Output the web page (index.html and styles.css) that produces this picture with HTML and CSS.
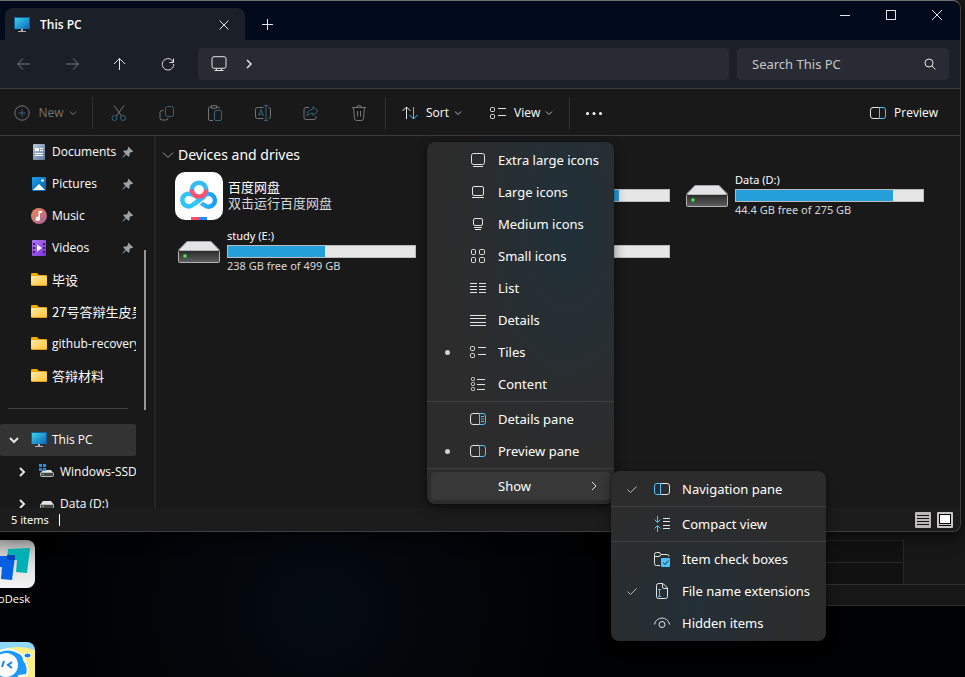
FILE: index.html
```html
<!DOCTYPE html>
<html lang="en">
<head>
<meta charset="utf-8">
<title>This PC</title>
<link rel="stylesheet" href="styles.css">
</head>
<body>
<svg class="defs" aria-hidden="true">
  <defs>
    <linearGradient id="g-screen" x1="0" y1="0" x2="1" y2="1"><stop offset="0" stop-color="#35d6e8"/><stop offset="1" stop-color="#1262bd"/></linearGradient>
    <linearGradient id="g-folder" x1="0" y1="0" x2="1" y2="1"><stop offset="0" stop-color="#ffe9a2"/><stop offset="1" stop-color="#ffc736"/></linearGradient>
    <linearGradient id="g-drive" x1="0" y1="0" x2="0" y2="1"><stop offset="0" stop-color="#292929"/><stop offset="1" stop-color="#606060"/></linearGradient>
    <linearGradient id="g-doc" x1="0" y1="0" x2="1" y2="1"><stop offset="0" stop-color="#b4c8dc"/><stop offset="1" stop-color="#5d7b9b"/></linearGradient>
    <linearGradient id="g-pic" x1="0" y1="0" x2="1" y2="1"><stop offset="0" stop-color="#1ba0e8"/><stop offset="1" stop-color="#0a5cad"/></linearGradient>
    <linearGradient id="g-music" x1="0" y1="0" x2="1" y2="1"><stop offset="0" stop-color="#f08a4c"/><stop offset="1" stop-color="#a95fa5"/></linearGradient>
    <linearGradient id="g-video" x1="0" y1="0" x2="1" y2="1"><stop offset="0" stop-color="#b274f2"/><stop offset="1" stop-color="#7b35d4"/></linearGradient>
    <linearGradient id="g-cloud" x1="0" y1="0" x2="1" y2="0"><stop offset="0" stop-color="#35cdfb"/><stop offset="1" stop-color="#1a9cff"/></linearGradient>
    <symbol id="pc" viewBox="0 0 16 16"><rect y="0" width="16" height="12" fill="#125f9c"/><rect x="1" y="1" width="14" height="11" fill="url(#g-screen)"/><path d="M7 12h2v2h3v1H4v-1h3z" fill="#a9b4bd"/></symbol>
    <symbol id="folder" viewBox="0 0 16 16"><path d="M0 2q0-1 1-1h5l2 2h7q1 0 1 1v3H0z" fill="#f0a800"/><rect y="4" width="16" height="10" rx="1" fill="#e0a020"/><rect y="4" width="16" height="9" rx="1" fill="url(#g-folder)"/></symbol>
    <symbol id="pin" viewBox="0 0 12 12"><path d="M6.500.8 11.200 5.500 10 6.300 8.900 6.100 7.400 7.600 7.600 9.800 6.600 10.800 4.200 8.400 1 11.600.400 11 3.600 7.800 1.200 5.400 2.200 4.400 4.500 4.600 6 3.100 5.700 1.800z" fill="#9aa1a7"/></symbol>
    <symbol id="drive" viewBox="0 0 42 24"><path d="M9 1.500h24L41 10H1z" fill="#e3e3e6"/><path d="M9 1.500h24M9 1.500.5 10M33 1.500 41.500 10" stroke="#a6a6aa" fill="none"/><rect x=".5" y="10.500" width="41" height="12" rx="1" fill="url(#g-drive)" stroke="#b5b5b5"/><circle cx="7" cy="16" r="2" fill="#24c62e"/><circle cx="7" cy="16" r=".8" fill="#a2ff9a"/></symbol>
    <symbol id="minidrive" viewBox="0 0 16 16"><path d="M4 5h8l3 4H1z" fill="#e3e3e6"/><rect x="1.500" y="8.500" width="13" height="4" rx="1" fill="#444" stroke="#bbb"/><path d="M3 10h2v1H3z" fill="#2fe03a"/></symbol>
    <symbol id="down" viewBox="0 0 8 8"><path d="m1 2.500 3 3 3-3"/></symbol>
    <symbol id="right" viewBox="0 0 8 12"><path d="m2 2 4 4-4 4"/></symbol>
    <symbol id="tick" viewBox="0 0 12 12"><path d="m1.500 6.500 3 3 6-6"/></symbol>
    <symbol id="preview" viewBox="0 0 16 16"><path d="M9.500 2.500H3q-2.500 0-2.500 2.500v6q0 2.500 2.500 2.500h6.500"/><path class="blue" d="M9.500 2.500H13q2.500 0 2.500 2.500v6q0 2.500-2.500 2.500H9.500z"/></symbol>
    <symbol id="tiles" viewBox="0 0 16 16"><rect x=".5" y="2.500" width="4" height="4" rx="1"/><rect x=".5" y="9.500" width="4" height="4" rx="1"/><path d="M8 3.500h8M8 10.500h8"/></symbol>
  </defs>
</svg>

<div class="back-window" aria-hidden="true">
  <div class="back-main"><div class="back-list"><i></i><i></i></div></div>
  <div class="back-foot"></div>
</div>

<div class="window">
  <header class="titlebar">
    <div class="tab"><svg class="i16"><use href="#pc"/></svg><span>This PC</span>
      <button aria-label="Close tab"><svg class="i12 line" viewBox="0 0 12 12"><path d="m1.500 1.500 9 9M10.500 1.500l-9 9"/></svg></button></div>
    <button class="new-tab" aria-label="New tab"><svg class="i12 line" viewBox="0 0 12 12"><path d="M6.500 1v11M1 6.500h11"/></svg></button>
    <div class="caption">
      <button aria-label="Minimize"><svg class="i12 line" viewBox="0 0 12 12"><path d="M1 6.500h10"/></svg></button>
      <button aria-label="Maximize"><svg class="i12 line" viewBox="0 0 12 12"><rect x="1.500" y="1.500" width="9" height="9"/></svg></button>
      <button aria-label="Close"><svg class="i12 line" viewBox="0 0 12 12"><path d="m1 1 10 10M11 1 1 11"/></svg></button>
    </div>
  </header>

  <div class="address-row">
    <div class="history">
      <button disabled aria-label="Back"><svg class="i16 line" viewBox="0 0 16 16"><path d="M14 8H2m5-5.500L1.500 8 7 13.500"/></svg></button>
      <button disabled aria-label="Forward"><svg class="i16 line" viewBox="0 0 16 16"><path d="M2 8h12M9 2.500 14.500 8 9 13.500"/></svg></button>
      <button aria-label="Up"><svg class="i16 line" viewBox="0 0 16 16"><path d="M7.500 14V2.500M2 8l5.500-5.500L13 8"/></svg></button>
      <button aria-label="Refresh"><svg class="i16 line" viewBox="0 0 16 16"><path d="M13.300 6.200A5.700 5.700 0 1 0 13.700 8M13.500 2.500v4h-4"/></svg></button>
    </div>
    <div class="address">
      <svg class="i16 line" viewBox="0 0 16 16"><rect x="1" y=".7" width="14" height="11.600" rx="2"/><path d="M5.500 12.500v2m5-2v2M3.500 14.500h9"/></svg>
      <svg class="crumb line"><use href="#right"/></svg>
    </div>
    <label class="search"><input type="text" placeholder="Search This PC" aria-label="Search This PC">
      <svg class="i12 line" viewBox="0 0 12 12"><circle cx="5" cy="5" r="4"/><path d="m8 8 3.500 3.500"/></svg></label>
  </div>

  <div class="toolbar">
    <button class="new" disabled><svg class="i16 line" viewBox="0 0 16 16"><circle cx="8" cy="8" r="7.200"/><path class="blue" d="M8 4.500v7M4.500 8h7"/></svg><span>New</span><svg class="i8 line"><use href="#down"/></svg></button>
    <div class="edit">
      <button disabled aria-label="Cut"><svg class="i16 line" viewBox="0 0 16 16"><path d="M3 .5 10.500 11M13 .5 5.500 11"/><circle class="blue" cx="3.500" cy="13" r="2.500"/><circle class="blue" cx="12" cy="13" r="2.500"/></svg></button>
      <button disabled aria-label="Copy"><svg class="i16 line" viewBox="0 0 16 16"><path d="M4.500 5.500H3q-2 0-2 2V13q0 2 2 2h4q2 0 2-2"/><rect class="blue" x="6.500" y="1.500" width="8" height="10" rx="2"/></svg></button>
      <button disabled aria-label="Paste"><svg class="i16 line" viewBox="0 0 16 16"><path d="M6 15.500H3q-1.500 0-1.500-1.500V3.500Q1.500 2 3 2h1m6 0h1q1.500 0 1.500 1.500M4.500.7h5v2.500h-5z"/><rect class="blue" x="7.500" y="5.500" width="7" height="10" rx="1.500"/></svg></button>
      <button disabled aria-label="Rename"><svg class="i16 line" viewBox="0 0 16 16"><path d="M8.500 2.500h-6Q.5 2.500.5 4.500v7q0 2 2 2h6m5-11q2 0 2 2v7q0 2-2 2"/><path class="blue" d="m3.500 11 2.500-6.500L8.500 11M4.300 9h3.400M11 1v14M9 .5h4m-4 15h4"/></svg></button>
      <button disabled aria-label="Share"><svg class="i16 line" viewBox="0 0 16 16"><path d="M6 2.500H3q-2 0-2 2v8q0 2 2 2h8q2 0 2-2V11"/><path class="blue" d="M10 1.500 15 6l-5 4.500V8Q6 8 4 11q0-6 6-7z"/></svg></button>
      <button disabled aria-label="Delete"><svg class="i16 line" viewBox="0 0 16 16"><path d="M1 2.500h14M5.500 2.500q0-2 2.500-2t2.500 2M2.500 2.500l1 11q.2 2 2 2h5q1.800 0 2-2l1-11M6.500 6v5.500m3-5.500v5.500"/></svg></button>
    </div>
    <div class="arrange">
      <button><svg class="i16 line" viewBox="0 0 16 16"><path d="M4.500 14V2M.5 6l4-4 4 4"/><path class="blue" d="M11.500 2v12M7.500 10l4 4 4-4"/></svg><span>Sort</span><svg class="i8 line dim"><use href="#down"/></svg></button>
      <button><svg class="i16 line"><use href="#tiles"/></svg><span>View</span><svg class="i8 line dim"><use href="#down"/></svg></button>
    </div>
    <button class="more" aria-label="See more"><svg class="i16" viewBox="0 0 16 16" fill="#fff"><circle cx="1.500" cy="8.500" r="1.500"/><circle cx="8" cy="8.500" r="1.500"/><circle cx="14.500" cy="8.500" r="1.500"/></svg></button>
    <button class="preview"><svg class="i16 line"><use href="#preview"/></svg><span>Preview</span></button>
  </div>

  <div class="body">
    <nav class="sidebar">
      <div class="tree">
        <a href="#"><svg class="i16" viewBox="0 0 16 16"><rect x="2" width="12" height="16" rx="1" fill="url(#g-doc)"/><path d="M4 4h4v3H4zm5 0h3v1H9zm0 2h3v1H9zM4 9h8v1H4zm0 2h8v1H4z" fill="#fff"/></svg><span>Documents</span><svg class="i12 pin"><use href="#pin"/></svg></a>
        <a href="#"><svg class="i16" viewBox="0 0 16 16"><rect x="1" y="1" width="14" height="14" rx="1" fill="url(#g-pic)"/><path d="m2 14 6-6 6 6z" fill="#fff"/><circle cx="11.500" cy="4.500" r="1.300" fill="#fff"/></svg><span>Pictures</span><svg class="i12 pin"><use href="#pin"/></svg></a>
        <a href="#"><svg class="i16" viewBox="0 0 16 16"><circle cx="8" cy="8" r="8" fill="url(#g-music)"/><path d="M7.500 3h3.500v2H9v5.500A2.200 2.200 0 1 1 7.500 8.700z" fill="#fff"/></svg><span>Music</span><svg class="i12 pin"><use href="#pin"/></svg></a>
        <a href="#"><svg class="i16" viewBox="0 0 16 16"><rect x="1" width="14" height="16" rx="1" fill="url(#g-video)"/><path d="M2 3h2v2H2zm0 4h2v2H2zm0 4h2v2H2zM12 3h2v2h-2zm0 4h2v2h-2zm0 4h2v2h-2z" fill="#3b1c72"/><path d="m6 4.500 5 3.500-5 3.500z" fill="#fff"/></svg><span>Videos</span><svg class="i12 pin"><use href="#pin"/></svg></a>
        <a href="#"><svg class="i16"><use href="#folder"/></svg><span class="cjk">毕设</span></a>
        <a href="#"><svg class="i16"><use href="#folder"/></svg><span class="cjk">27号答辩生皮昊</span></a>
        <a href="#"><svg class="i16"><use href="#folder"/></svg><span>github-recovery</span></a>
        <a href="#"><svg class="i16"><use href="#folder"/></svg><span class="cjk">答辩材料</span></a>
        <hr>
        <a href="#" class="root current"><svg class="i12 line bold" viewBox="0 0 12 12"><path d="m2 4 4 4 4-4"/></svg><svg class="i16"><use href="#pc"/></svg><span>This PC</span></a>
        <a href="#" class="child"><svg class="arrow line bold"><use href="#right"/></svg><svg class="i16" viewBox="0 0 16 16"><path d="M4 6h8l3 4H1z" fill="#e3e3e6"/><rect x="1.500" y="8.500" width="13" height="4" rx="1" fill="#444" stroke="#bbb"/><path d="M3 10h2v1H3z" fill="#2fe03a"/><path d="M0 0h3v3H0zm4 0h3v3H4zM0 4h3v3H0zm4 0h3v3H4z" fill="#1c93e0"/></svg><span>Windows-SSD</span></a>
        <a href="#" class="child"><svg class="arrow line bold"><use href="#right"/></svg><svg class="i16"><use href="#minidrive"/></svg><span>Data (D:)</span></a>
      </div>
      <div class="scroll"><i></i></div>
    </nav>
    <main class="content">
      <h1><svg class="i12 line" viewBox="0 0 12 12"><path d="m1 3.500 5 5 5-5"/></svg>Devices and drives</h1>
      <div class="tiles">
        <div class="tile cloud">
          <svg class="app" viewBox="0 0 48 48"><rect width="48" height="48" rx="10" fill="#fff"/><g fill="none" stroke-width="4.500"><path d="M29.500 24.500 17.500 33A6.300 6.300 0 1 1 15.500 22Q19 22 23 26l2 2" stroke="#30c5fb"/><path d="M18.500 32.500 29 24a6.300 6.300 0 1 1 1 9.500q-2-.5-3.500-2.500" stroke="url(#g-cloud)"/><path d="M16.800 20v-2a7.200 7.200 0 0 1 14.400 0v2" stroke="#33bdfb"/><path d="M16.800 17.500a7.200 7.200 0 0 0 14.400 0" stroke="#fc5371"/></g><path d="M16 45h8v3h-8z" fill="#fc4b6c"/><path d="M24 45h8v3h-8z" fill="#2589ff"/></svg>
          <div class="info cjk"><b>百度网盘</b><small>双击运行百度网盘</small></div>
        </div>
        <div class="tile"><svg class="disk"><use href="#drive"/></svg><div class="info"><b></b><div class="meter"><i style="width:73%"></i></div><small></small></div></div>
        <div class="tile"><svg class="disk"><use href="#drive"/></svg><div class="info"><b>Data (D:)</b><div class="meter"><i style="width:84%"></i></div><small>44.4 GB free of 275 GB</small></div></div>
        <div class="tile"><svg class="disk"><use href="#drive"/></svg><div class="info"><b>study (E:)</b><div class="meter"><i style="width:52%"></i></div><small>238 GB free of 499 GB</small></div></div>
        <div class="tile"><svg class="disk"><use href="#drive"/></svg><div class="info"><b></b><div class="meter"><i style="width:50%"></i></div><small></small></div></div>
      </div>
    </main>
  </div>

  <footer class="status"><span>5 items</span>
    <button aria-label="Details view"><svg class="i16" viewBox="0 0 16 16"><rect width="16" height="16" rx="1" fill="#bcbabb"/><path d="M2 3.500h12M2 6.500h12M2 9.500h12M2 12.500h12" stroke="#111"/></svg></button>
    <button aria-label="Large icons view"><svg class="i16" viewBox="0 0 16 16"><rect width="16" height="16" rx="1" fill="#c8c6c4"/><rect x="2.500" y="2.500" width="11" height="9" fill="#fff" stroke="#000"/><path d="M2 13.500h12" stroke="#000"/></svg></button>
  </footer>

  <div class="menu view-menu" role="menu">
    <button role="menuitem"><svg class="i16 line" viewBox="0 0 16 16"><rect x="1.500" y="1.500" width="13" height="11" rx="2"/><path d="M3 14.500h10"/></svg><span>Extra large icons</span></button>
    <button role="menuitem"><svg class="i16 line" viewBox="0 0 16 16"><rect x="2.500" y="2.500" width="11" height="9" rx="1.500"/><path d="M2 13.500h12"/></svg><span>Large icons</span></button>
    <button role="menuitem"><svg class="i16 line" viewBox="0 0 16 16"><rect x="3.500" y="2.500" width="9" height="7" rx="1.500"/><path d="M4 11.500h8M5 13.500h6"/></svg><span>Medium icons</span></button>
    <button role="menuitem"><svg class="i16 line" viewBox="0 0 16 16"><rect x="1.500" y="1.500" width="4" height="5" rx="1"/><rect x="9.500" y="1.500" width="5" height="5" rx="1"/><rect x="1.500" y="9.500" width="4" height="5" rx="1"/><rect x="9.500" y="9.500" width="5" height="5" rx="1"/></svg><span>Small icons</span></button>
    <button role="menuitem"><svg class="i16 line" viewBox="0 0 16 16"><path d="M0 3.500h7m2 0h7M0 6.500h7m2 0h7M0 9.500h7m2 0h7M0 12.500h7m2 0h7"/></svg><span>List</span></button>
    <button role="menuitem"><svg class="i16 line" viewBox="0 0 16 16"><path d="M0 3.500h16M0 6.500h16M0 10.500h16M0 13.500h16"/></svg><span>Details</span></button>
    <button role="menuitem" class="chosen"><svg class="i16 line"><use href="#tiles"/></svg><span>Tiles</span></button>
    <button role="menuitem"><svg class="i16 line" viewBox="0 0 16 16"><rect x="1.500" y="1.500" width="3" height="3" rx="1"/><rect x="1.500" y="6.500" width="3" height="3" rx="1"/><rect x="1.500" y="11.500" width="3" height="3" rx="1"/><path d="M7 3.500h8M7 8.500h8M7 13.500h8"/></svg><span>Content</span></button>
    <hr>
    <button role="menuitem"><svg class="i16 line" viewBox="0 0 16 16"><use href="#preview" width="16" height="16"/><path class="blue" d="M11 5.500h3M11 8h3M11 10.500h3"/></svg><span>Details pane</span></button>
    <button role="menuitem" class="chosen"><svg class="i16 line"><use href="#preview"/></svg><span>Preview pane</span></button>
    <hr>
    <button role="menuitem" class="open"><span>Show</span><svg class="arrow line"><use href="#right"/></svg></button>
  </div>

  <div class="menu show-menu" role="menu">
    <button role="menuitem" class="checked"><svg class="i12 line"><use href="#tick"/></svg><svg class="i16 line" viewBox="0 0 16 16"><path d="M6.500 2.500H13q2.500 0 2.500 2.500v6q0 2.500-2.500 2.500H6.500"/><path class="blue" d="M6.500 2.500H3Q.5 2.500.5 5v6q0 2.500 2.500 2.500h3.500z"/></svg><span>Navigation pane</span></button>
    <hr>
    <button role="menuitem"><svg class="i16 line" viewBox="0 0 16 16"><path d="M9 2.500h7M9 5.500h7M9 9.500h7M9 12.500h7"/><path class="blue" d="M3.500 0v6M.5 3.500l3 3 3-3M3.500 16v-6M.5 12.500l3-3 3 3"/></svg><span>Compact view</span></button>
    <hr>
    <button role="menuitem"><svg class="i16 line" viewBox="0 0 16 16"><path d="M6 14.500H2.500q-2 0-2-2v-9q0-2 2-2H5q1 0 2 2h6q2 0 2 2M.5 5.500H5q1 0 2-2"/><rect x="7" y="7" width="9" height="9" rx="1" fill="#4cc2ff" stroke="none"/><path d="m9 11.500 2 2 3.500-4" stroke="#18232b"/></svg><span>Item check boxes</span></button>
    <button role="menuitem" class="checked"><svg class="i12 line"><use href="#tick"/></svg><svg class="i16 line" viewBox="0 0 16 16"><path d="M4.500.5H9L13.500 5v8.500q0 2-2 2h-7q-2 0-2-2v-11q0-2 2-2zM8.500.5V4q0 1.500 1.500 1.500h3.500"/><path class="blue" d="M5.500 6.500v7M4 6.500h3M4 13.500h3"/></svg><span>File name extensions</span></button>
    <button role="menuitem"><svg class="i16 line" viewBox="0 0 16 16"><path d="M.5 9.500C2 1 14 1 15.500 9.500"/><circle cx="8" cy="9.500" r="3"/></svg><span>Hidden items</span></button>
  </div>
</div>

<section class="desktop">
  <figure>
    <svg viewBox="0 0 48 48"><defs><linearGradient id="g-td" x1="0" y1="0" x2="0" y2="1"><stop offset="0" stop-color="#aaa"/><stop offset=".5" stop-color="#ddd"/><stop offset="1" stop-color="#f4f4f4"/></linearGradient></defs><rect width="48" height="48" rx="8" fill="url(#g-td)"/><path d="M21 9l22-1-3 25-11-1 1-12H20z" fill="#00b0b4"/><path d="M5 16h23l-3 24-11-1 1-12H4z" fill="#0560e4"/><path d="M20 15h8v5h-8z" fill="#0844b5"/></svg>
    <figcaption>ToDesk</figcaption>
  </figure>
  <figure>
    <svg viewBox="0 0 48 48"><defs><clipPath id="c-app"><rect width="48" height="48" rx="8"/></clipPath></defs><g clip-path="url(#c-app)"><rect width="48" height="48" fill="#8fd9fb"/><path d="M14 8q16-6 34 0v40H14z" fill="#fdee83"/><path d="M8 12q12-9 26 0 3 2 3 6 5 6 3 15l-8 1-4 14H8z" fill="#1c98f7" stroke="#fff" stroke-width="2"/><circle cx="19" cy="23" r="12" fill="#fff"/><path d="m17 19-2 6m10-5-4 3 4 3" fill="none" stroke="#1683e8" stroke-width="2"/><ellipse cx="40.500" cy="13.500" rx="3.500" ry="2.500" fill="#1683e8" stroke="#fff"/></g></svg>
  </figure>
</section>
</body>
</html>
```
FILE: styles.css
```css
* { box-sizing: border-box; }

body {
  margin: 0;
  height: 100vh;
  overflow: hidden;
  position: relative;
  isolation: isolate;
  display: grid;
  grid-template-rows: minmax(0, 1fr) 145px;
  background:
    radial-gradient(ellipse at 320px 610px, #050b12, transparent 280px),
    #000102;
  color: #fff;
  font: 12px/16px "Open Sans", "Noto Sans", "Noto Sans CJK SC", sans-serif;
}

button {
  display: flex;
  align-items: center;
  justify-content: center;
  padding: 0;
  border: 0;
  background: none;
  color: inherit;
  font: inherit;
}

a { color: inherit; text-decoration: none; }
svg { display: block; flex: none; }
hr { border: 0; height: 1px; background: #404040; }

.defs { position: absolute; width: 0; height: 0; }
.i16 { width: 16px; height: 16px; }
.i12 { width: 12px; height: 12px; }
.i8 { width: 8px; height: 8px; }
.arrow, .crumb { width: 8px; height: 12px; }
.line { fill: none; stroke: #e4e4e4; stroke-width: 1; }
.bold { stroke-width: 2; }
.dim { stroke: #b5b5b5; }
.blue { stroke: #4cc2ff; }
.cjk { font-family: "Noto Sans CJK SC", sans-serif; font-size: 13px; }

/* Window left open behind the file manager */
.back-window {
  position: absolute;
  z-index: -1;
  inset: 0 0 71px 65%;
  display: grid;
  grid-template-rows: 1fr 21px;
  background: #171717;
}
.back-main {
  display: flex;
  align-items: flex-end;
  border-bottom: 1px solid #303030;
}
.back-list {
  width: calc(100% - 61px);
  border-right: 1px solid #292929;
  background: #111;
}
.back-list i { display: block; height: 22px; border-top: 1px solid #262626; }
.back-foot { border-bottom: 1px solid #303030; }

.window {
  position: relative;
  display: flex;
  flex-direction: column;
  min-height: 0;
  margin-right: 4px;
  border: solid #3d3d3d;
  border-width: 1px 1px 1px 0;
  border-top-color: #707070;
  border-radius: 0 8px 8px 0;
  background: #191919;
  box-shadow: 0 4px 16px #000a;
}

.titlebar {
  display: flex;
  height: 39px;
  padding-left: 5px;
  background: #000a1b;
  border-radius: 0 8px 0 0;
}
.tab {
  display: flex;
  align-items: center;
  gap: 10px;
  width: 240px;
  margin-top: 7px;
  padding: 1px 15px 0 9px;
  border-radius: 8px 8px 0 0;
  background: #1b1f27;
  font-weight: 600;
}
.tab button { margin-left: auto; }
.new-tab { width: 44px; padding-top: 7px; }
.caption { display: flex; height: 28px; margin-left: auto; }
.caption button { width: 46px; }

.address-row {
  display: flex;
  gap: 8px;
  height: 49px;
  padding: 8px 11px 8px 0;
  background: #1b1f27;
  border-bottom: 1px solid #3c3c3e;
}
.history { display: grid; grid-template-columns: repeat(4, 48px); width: 190px; }
button:disabled .line { opacity: 0.45; }
button:disabled { color: #747474; }
.address, .search {
  display: flex;
  align-items: center;
  border-radius: 4px;
  background: #282b34;
}
.address { flex: 1; gap: 18px; padding-left: 13px; }
.crumb { stroke-width: 1.5; }
.search { width: 212px; padding: 0 13px 0 15px; }
.search input {
  flex: 1;
  min-width: 0;
  padding: 0;
  border: 0;
  background: none;
  color: #fff;
  font: 13px/20px "Noto Sans", sans-serif;
}
.search input::placeholder { color: #c6c7ca; }

.toolbar {
  display: flex;
  align-items: center;
  height: 47px;
  padding: 2px 22px 0 15px;
  border-bottom: 1px solid #3a3a3a;
}
.toolbar > :not(.preview) { height: 32px; }
.toolbar button { gap: 8px; }
.toolbar span + .i8 { margin-left: -3px; }
.new { width: 61px; }
.edit {
  display: grid;
  grid-template-columns: repeat(6, 48px);
  margin-left: 16px;
  padding: 0 2px;
  border: solid #303030;
  border-width: 0 1px;
}
.arrange {
  display: flex;
  gap: 28px;
  padding: 0 16px;
  border-right: 1px solid #303030;
}
.more { width: 48px; }
.preview { margin-left: auto; }

.body { display: flex; flex: 1; min-height: 0; }
.sidebar { display: flex; overflow: hidden; width: 156px; border-right: 2px solid #262626; }
.tree { width: 136px; overflow: hidden; }
.tree a {
  display: flex;
  align-items: center;
  gap: 5px;
  height: 32px;
  padding: 0 2px 0 31px;
  white-space: nowrap;
}
.tree hr { margin: 16px 8px 15px; }
.tree .root { gap: 11px; padding-left: 8px; }
.tree .root span { margin-left: -6px; }
.tree .child { gap: 5px; padding-left: 18px; }
.tree .child .arrow { margin-right: 8px; }
.current { background: #333; border-radius: 2px; }
.tree .pin { margin-left: auto; }
.scroll { display: flex; justify-content: center; align-items: flex-start; width: 18px; padding-top: 114px; }
.scroll i { width: 2px; height: 160px; background: #989898; }

.content { flex: 1; min-width: 0; padding: 9px 0 0 16px; }
h1 {
  display: flex;
  align-items: center;
  gap: 4px;
  margin: 0 0 3px -10px;
  font-family: "Noto Sans", sans-serif;
  font-size: 14px;
  line-height: 20px;
  font-weight: 400;
}
h1 .line { stroke: #999; }
.tiles { display: grid; grid-template-columns: repeat(auto-fill, 254px); }
.tile { display: flex; align-items: center; height: 56px; padding: 0 10px 0 6px; gap: 7px; }
.cloud { padding-left: 3px; gap: 5px; }
.app { width: 48px; height: 48px; }
.disk { width: 42px; height: 24px; }
.info { flex: 1; white-space: nowrap; font-size: 11px; font-family: "Noto Sans", sans-serif; }
.info b, .info small { display: block; font-size: inherit; font-weight: 400; }
.info b { height: 17px; }
.info small { height: 18px; color: #d8d8d8; }
.info.cjk { font-size: 13px; font-family: "Noto Sans CJK SC", sans-serif; }
.info.cjk b { height: 16px; }
.meter { height: 13px; border: 1px solid #bcbcbc; background: #e6e6e6; }
.meter i { display: block; height: 100%; background: #26a0da; }

.status {
  display: flex;
  align-items: center;
  gap: 6px;
  height: 23px;
  padding: 0 7px 0 11px;
  background: #1c1c1c;
  border-radius: 0 0 8px 0;
}
.status span {
  margin-right: auto;
  padding-right: 10px;
  border-right: 1px solid #fff;
  line-height: 12px;
  font-size: 11px;
  font-family: "Noto Sans", sans-serif;
}

.menu {
  position: absolute;
  padding: 2px 0;
  border-radius: 8px;
  background: #2c2c2c;
  box-shadow: 0 4px 12px #0007, 0 0 1px #000;
  font-family: "Noto Sans", sans-serif;
  font-size: 13px;
}
.menu button {
  justify-content: flex-start;
  gap: 12px;
  width: 100%;
  height: 32px;
  padding-left: 43px;
}
.menu hr { margin: 1px 0; }
.view-menu {
  top: 141px;
  left: 427px;
  width: 187px;
  background: radial-gradient(ellipse at 75% 22%, #203039, #272e32 32%, #2c2c2c 60%);
}
.show-menu {
  top: 470px;
  left: 611px;
  width: 215px;
  background: radial-gradient(ellipse at 38% 80%, #232f37, #2c2c2c 60%);
}
.menu .chosen { padding-left: 18px; gap: 12px; }
.menu .chosen::before {
  content: "";
  width: 5px;
  height: 5px;
  margin-right: 8px;
  border-radius: 50%;
  background: #d0d0d0;
}
.menu .checked { padding-left: 15px; }
.menu .checked .i12 { margin-right: 4px; stroke: #bbb; }
.menu .open {
  width: calc(100% - 8px);
  height: 28px;
  margin: 3px 4px 2px;
  padding: 0 12px 0 67px;
  border-radius: 4px;
  background: #383838;
}
.open .arrow { margin-left: auto; }

.desktop { padding-top: 8px; overflow: hidden; z-index: -1; position: relative; }
figure { width: 48px; margin: 0 0 35px -13px; text-align: center; }
figure svg { width: 48px; height: 48px; margin-bottom: 3px; }
figcaption { font-size: 11px; }
```
